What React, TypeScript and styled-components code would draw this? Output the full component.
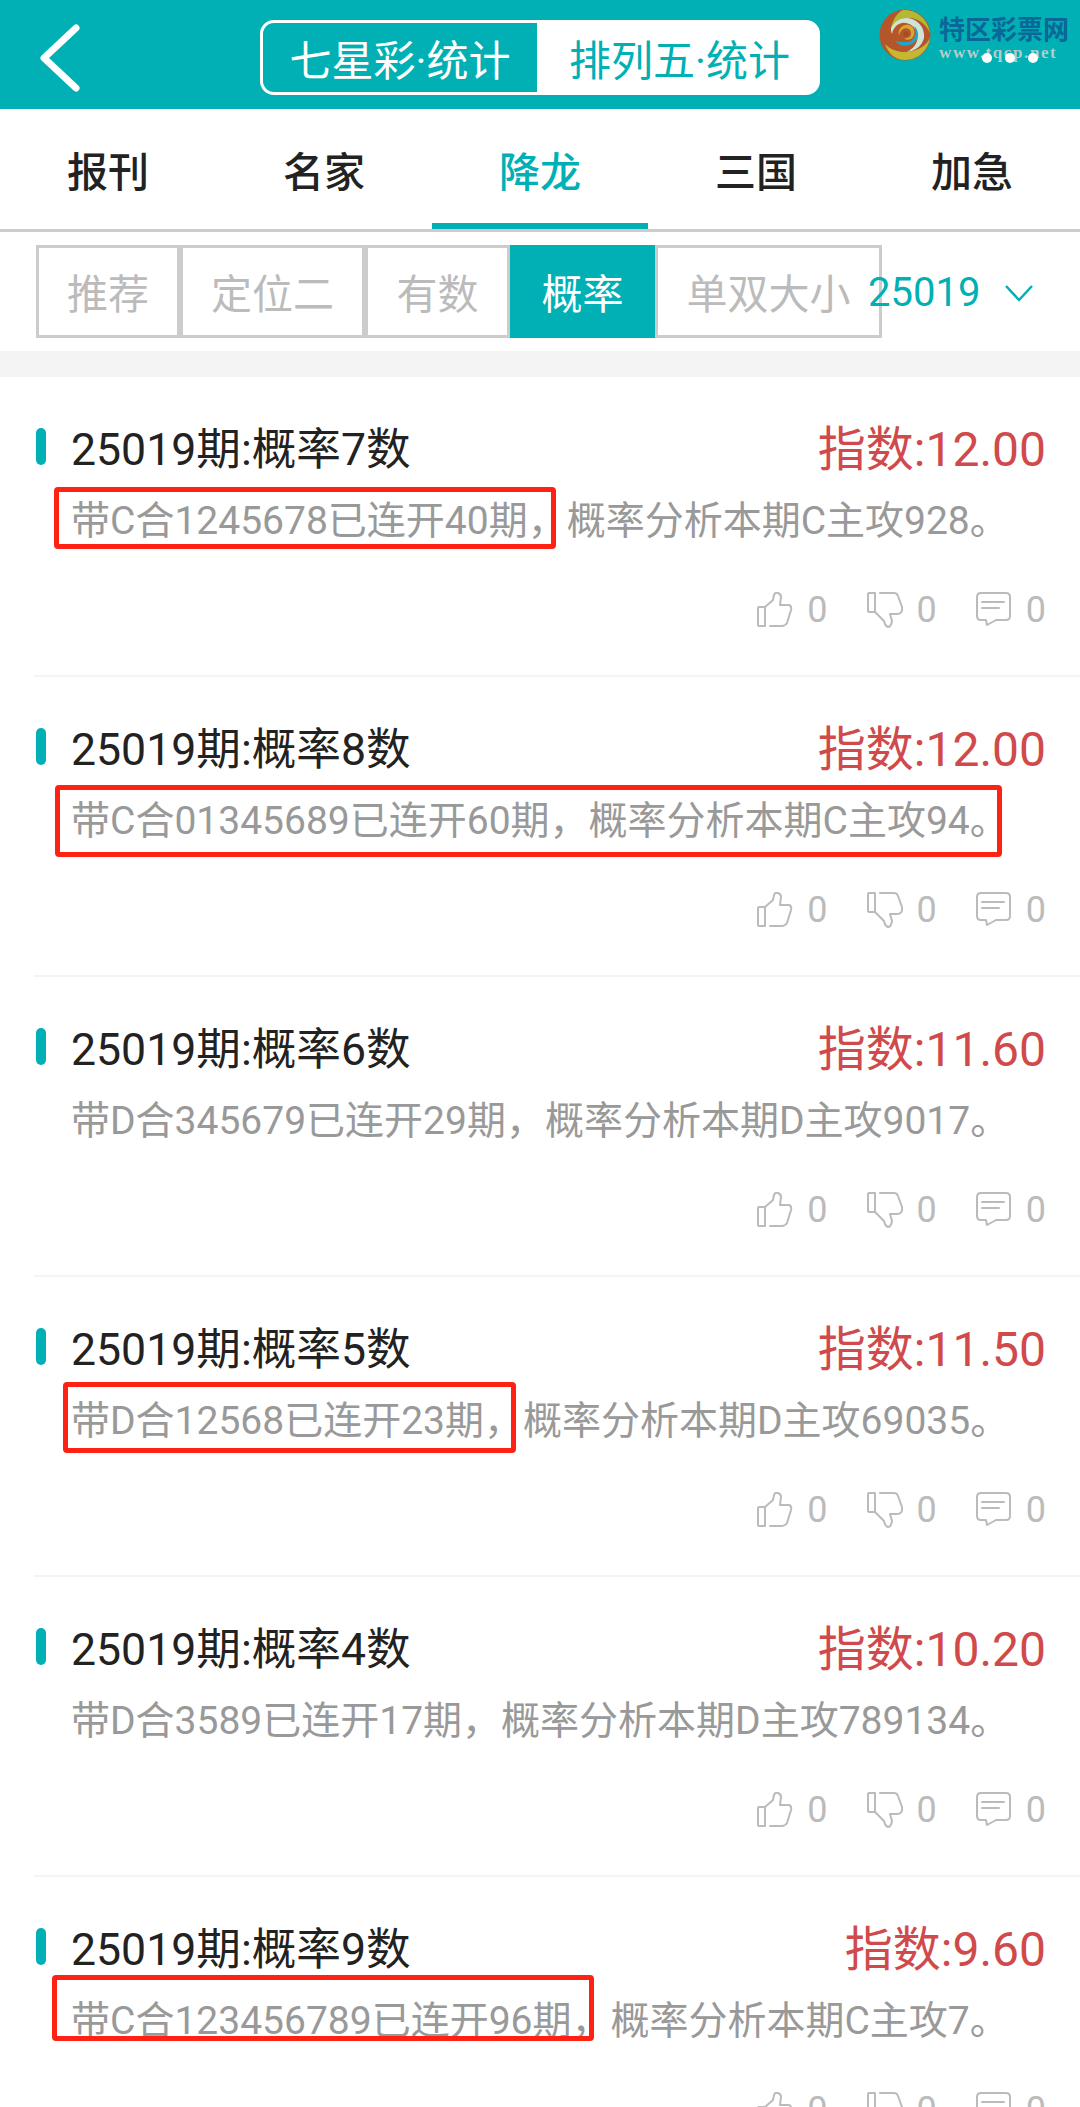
import * as React from "react";
import styled, { createGlobalStyle } from "styled-components";

const TEAL = "#00b0b5";
const FONT = `Roboto, "Noto Sans CJK SC", sans-serif`;

const GlobalStyle = createGlobalStyle`
  html, body {
    margin: 0;
    padding: 0;
    background: #fff;
  }
  body {
    width: 1080px;
    height: 2107px;
    overflow: hidden;
    font-family: ${FONT};
  }
`;

const Header = styled.header`
  position: relative;
  height: 109px;
  background: ${TEAL};
  display: grid;
  grid-template-columns: 1fr 560px 1fr;
  align-items: center;
`;

const Back = styled.svg`
  width: 44px;
  height: 68px;
  margin-left: 38px;
  margin-top: 6px;
`;

const Segment = styled.div`
  height: 75px;
  margin-top: 6px;
  box-sizing: border-box;
  display: flex;
  background: #fff;
  border: 3px solid #fff;
  border-radius: 14px;
  overflow: hidden;
`;

const SegmentItem = styled.div<{ $active?: boolean }>`
  height: 100%;
  width: ${(p) => (p.$active ? "274px" : "280px")};
  box-sizing: border-box;
  padding-left: ${(p) => (p.$active ? "0" : "5px")};
  display: flex;
  align-items: center;
  justify-content: center;
  font-size: 42px;
  background: ${(p) => (p.$active ? TEAL : "#fff")};
  color: ${(p) => (p.$active ? "#fff" : TEAL)};
`;

const Watermark = styled.div`
  position: absolute;
  left: 879px;
  top: 9px;
  width: 195px;
  height: 54px;
  display: flex;
  gap: 8px;
`;

const WatermarkText = styled.div`
  display: flex;
  flex-direction: column;
  padding-top: 7px;
`;

const WatermarkName = styled.div`
  font-size: 26px;
  font-weight: 700;
  line-height: 28px;
  color: #0b6797;
  white-space: nowrap;
`;

const WatermarkUrl = styled.div`
  font-family: "Liberation Serif", serif;
  font-size: 17px;
  font-weight: 700;
  line-height: 17px;
  letter-spacing: 1.6px;
  color: #b4cccc;
  white-space: nowrap;
`;

const Dots = styled.div`
  position: absolute;
  left: 982px;
  top: 53px;
  display: flex;
  gap: 13px;
`;

const Dot = styled.i`
  display: block;
  width: 10px;
  height: 10px;
  border-radius: 50%;
  background: #fff;
`;

const Tabs = styled.nav`
  height: 123px;
  box-sizing: border-box;
  display: flex;
  border-bottom: 3px solid #ccc;
`;

const Tab = styled.div<{ $active?: boolean }>`
  flex: 1;
  display: flex;
  align-items: center;
  justify-content: center;
  padding-top: 5px;
  box-sizing: border-box;
  font-size: 41px;
  font-weight: 500;
  color: ${(p) => (p.$active ? TEAL : "#222")};
  border-bottom: 6px solid ${(p) => (p.$active ? TEAL : "transparent")};
`;

const SubBar = styled.div`
  height: 119px;
  box-sizing: border-box;
  padding: 13px 0 0 36px;
  display: flex;
  align-items: flex-start;
`;

const SubTabs = styled.div`
  display: flex;
  height: 93px;
`;

const SubTab = styled.div<{ $w: number; $active?: boolean }>`
  width: ${(p) => p.$w}px;
  box-sizing: border-box;
  display: flex;
  align-items: center;
  justify-content: center;
  padding-bottom: 2px;
  font-size: 41px;
  border: 3px solid ${(p) => (p.$active ? TEAL : "#ccc")};
  background: ${(p) => (p.$active ? TEAL : "#fff")};
  color: ${(p) => (p.$active ? "#fff" : "#bbb")};
  white-space: nowrap;
`;

const Period = styled.div`
  margin-left: -14px;
  height: 93px;
  padding-top: 2px;
  box-sizing: border-box;
  display: flex;
  align-items: center;
  font-size: 40px;
  color: ${TEAL};
  gap: 24px;
`;

const Band = styled.div`
  height: 26px;
  background: #f4f4f4;
`;

const List = styled.main`
  display: flex;
  flex-direction: column;
`;

const Item = styled.article`
  height: 300px;
  box-sizing: border-box;
  margin-left: 34px;
  padding: 42px 34px 0 2px;
  border-bottom: 2px solid #f4f4f4;
`;

const TitleRow = styled.div`
  height: 52px;
  display: flex;
  align-items: center;
`;

const Accent = styled.i`
  width: 10px;
  height: 37px;
  border-radius: 5px;
  background: ${TEAL};
  margin-right: 25px;
  margin-top: 3px;
`;

const Title = styled.h2`
  margin: 0;
  font-size: 44.6px;
  font-weight: 400;
  color: #222;
  white-space: nowrap;
`;

const Score = styled.div`
  margin-left: auto;
  font-size: 48px;
  color: #d04a4c;
  white-space: nowrap;
`;

const Desc = styled.p`
  position: relative;
  margin: 28px 0 0 35px;
  height: 44px;
  line-height: 44px;
  font-size: 39px;
  color: #999;
  white-space: nowrap;
`;

const RedBox = styled.span<{ $l: number; $t: number; $w: number; $h: number }>`
  position: absolute;
  left: ${(p) => p.$l}px;
  top: ${(p) => p.$t}px;
  width: ${(p) => p.$w}px;
  height: ${(p) => p.$h}px;
  box-sizing: border-box;
  border: 5px solid #ff2113;
  border-radius: 4px;
`;

const Stats = styled.div`
  margin-top: 49px;
  display: flex;
  justify-content: flex-end;
  gap: 39px;
`;

const Stat = styled.div`
  height: 36px;
  display: flex;
  align-items: center;
  gap: 14px;
  font-size: 36px;
  color: #bbb;
`;

const IconSvg = styled.svg`
  width: 36px;
  height: 36px;
  fill: none;
  stroke: #bbb;
  stroke-width: 2;
  stroke-linecap: round;
  stroke-linejoin: round;
`;

const ThumbUp = () => (
  <IconSvg viewBox="0 0 36 36">
    <path d="M8 15H2Q1 15 1 16V33Q1 34 2 34H8V15" />
    <path d="M8 15L16 8L17 3Q18 0 21 1Q24 2 24 5L23 13H32Q35 14 34 18L30 31Q28 34 25 34H13" />
  </IconSvg>
);

const ThumbDown = () => (
  <IconSvg viewBox="0 0 36 36">
    <path d="M8 1H2Q1 1 1 2V19Q1 20 2 20H8V1" />
    <path d="M13 1H27Q30 1 31 4L35 15Q36 22 30 22H23L25 29Q24 35 21 35Q18 34 17 29L8 20" />
  </IconSvg>
);

const Comment = () => (
  <IconSvg viewBox="0 0 36 36">
    <path d="M5 1H30Q34 1 34 5V24Q34 28 30 28H20L11 33L10 28H5Q1 28 1 24V5Q1 1 5 1Z" />
    <path d="M6 10H28M6 16H23" />
  </IconSvg>
);

const SwirlLogo = () => (
  <svg width="52" height="52" viewBox="0 0 52 52" style={{ flex: "none" }}>
    <circle cx="26" cy="26" r="25.5" fill="#b5562a" />
    <path d="M24 1C36 0 49 9 51 24C46 13 37 8 28 9C20 10 15 14 12 19C14 10 18 4 24 1Z" fill="#b5b832" />
    <path d="M12 19C16 11 25 7 33 10C41 13 46 20 45 29C43 37 36 42 28 43C37 38 40 31 38 24C36 17 29 13 23 14C18 15 14 19 13 25C12 23 12 21 12 19Z" fill="#cfe3d6" />
    <path d="M6 35C14 44 31 46 43 38C48 35 50 31 51 28C50 40 40 51 26 51C16 51 9 44 6 35Z" fill="#c7b62f" />
    <path d="M16 32C22 39 33 38 38 30C40 26 39 20 35 17C39 25 35 33 27 33C22 33 19 33 16 32Z" fill="#22a5c9" />
    <path d="M20 27C18 20 24 15 30 16C35 17 37 24 34 28C32 31 27 32 25 29C29 30 33 27 32 23C31 19 26 18 23 21C21 23 20 25 20 27Z" fill="#d6a92a" />
    <circle cx="27" cy="25" r="2.5" fill="#a34e22" />
  </svg>
);

type Mark = { l: number; t: number; w: number; h: number };

type Row = {
  title: string;
  score: string;
  desc: string;
  mark?: Mark;
};

const rows: Row[] = [
  {
    title: "25019期:概率7数",
    score: "指数:12.00",
    desc: "带C合1245678已连开40期，概率分析本期C主攻928。",
    mark: { l: -17, t: -12, w: 502, h: 62 },
  },
  {
    title: "25019期:概率8数",
    score: "指数:12.00",
    desc: "带C合01345689已连开60期，概率分析本期C主攻94。",
    mark: { l: -16, t: -14, w: 947, h: 72 },
  },
  {
    title: "25019期:概率6数",
    score: "指数:11.60",
    desc: "带D合345679已连开29期，概率分析本期D主攻9017。",
  },
  {
    title: "25019期:概率5数",
    score: "指数:11.50",
    desc: "带D合12568已连开23期，概率分析本期D主攻69035。",
    mark: { l: -8, t: -17, w: 453, h: 71 },
  },
  {
    title: "25019期:概率4数",
    score: "指数:10.20",
    desc: "带D合3589已连开17期，概率分析本期D主攻789134。",
  },
  {
    title: "25019期:概率9数",
    score: "指数:9.60",
    desc: "带C合123456789已连开96期，概率分析本期C主攻7。",
    mark: { l: -19, t: -24, w: 542, h: 66 },
  },
];

const tabs = ["报刊", "名家", "降龙", "三国", "加急"];
const subTabs = [
  { label: "推荐", w: 144 },
  { label: "定位二", w: 185 },
  { label: "有数", w: 145 },
  { label: "概率", w: 145, active: true },
  { label: "单双大小", w: 227 },
];

const App: React.FC = () => {
  return (
    <>
      <GlobalStyle />
      <Header>
        <Back viewBox="0 0 44 68">
          <path d="M38 4L6 34L38 64" fill="none" stroke="#fff" strokeWidth="7" strokeLinecap="round" strokeLinejoin="round" />
        </Back>
        <Segment>
          <SegmentItem $active>七星彩·统计</SegmentItem>
          <SegmentItem>排列五·统计</SegmentItem>
        </Segment>
        <Watermark>
          <SwirlLogo />
          <WatermarkText>
            <WatermarkName>特区彩票网</WatermarkName>
            <WatermarkUrl>www.tqcp.net</WatermarkUrl>
          </WatermarkText>
        </Watermark>
        <Dots>
          <Dot />
          <Dot />
          <Dot />
        </Dots>
      </Header>
      <Tabs>
        {tabs.map((t) => (
          <Tab key={t} $active={t === "降龙"}>{t}</Tab>
        ))}
      </Tabs>
      <SubBar>
        <SubTabs>
          {subTabs.map((s) => (
            <SubTab key={s.label} $w={s.w} $active={s.active}>{s.label}</SubTab>
          ))}
        </SubTabs>
        <Period>
          25019
          <svg width="30" height="26" viewBox="0 0 30 26">
            <path d="M2 6L15 20L28 6" fill="none" stroke={TEAL} strokeWidth="2.5" />
          </svg>
        </Period>
      </SubBar>
      <Band />
      <List>
        {rows.map((r) => (
          <Item key={r.title}>
            <TitleRow>
              <Accent />
              <Title>{r.title}</Title>
              <Score>{r.score}</Score>
            </TitleRow>
            <Desc>
              {r.desc}
              {r.mark && <RedBox $l={r.mark.l} $t={r.mark.t} $w={r.mark.w} $h={r.mark.h} />}
            </Desc>
            <Stats>
              <Stat><ThumbUp />0</Stat>
              <Stat><ThumbDown />0</Stat>
              <Stat><Comment />0</Stat>
            </Stats>
          </Item>
        ))}
      </List>
    </>
  );
};

export default App;
